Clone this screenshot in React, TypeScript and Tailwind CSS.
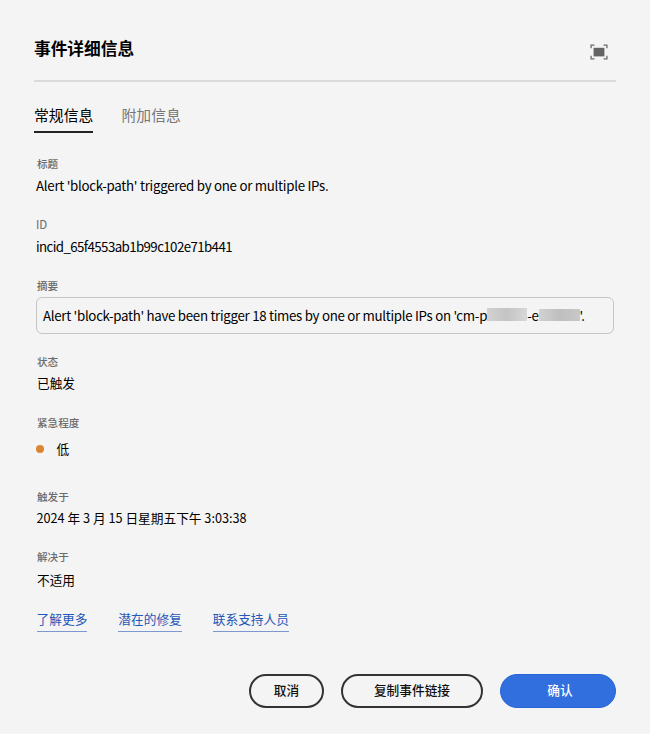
import type { ReactNode } from 'react';

function Label({ children, className = '' }: { children: ReactNode; className?: string }) {
  return <div className={`h-4 leading-4 whitespace-nowrap text-[#6b6b6b] ${className}`}>{children}</div>;
}

function Value({ children, className = '' }: { children: ReactNode; className?: string }) {
  return <div className={`h-5 leading-5 whitespace-nowrap text-black ${className}`}>{children}</div>;
}

function FullscreenIcon() {
  return (
    <svg width="18" height="16" viewBox="0 0 18 16" fill="none">
      <path d="M1.1 4.3V1.2h3.4M13.5 1.2h3.4v3.1M16.9 11.7v3.1h-3.4M4.5 14.8H1.1v-3.1" stroke="#6b6b6b" strokeWidth="1.3" />
      <rect x="3.6" y="3.8" width="10.8" height="8.6" fill="#636363" />
    </svg>
  );
}

export default function App() {
  return (
    <div className="flex h-[734px] w-[650px] flex-col bg-[#f4f4f4] pt-[36px] pr-[34px] pl-[34px] font-['Noto_Sans_CJK_SC',sans-serif] text-[12.7px] text-[#111]">
      <header className="flex h-[46px] justify-between border-b-2 border-[#dadada] pr-[8.5px]">
        <h1 className="text-[16.7px] leading-6 font-bold text-black">事件详细信息</h1>
        <button className="mt-[7.5px] h-4" aria-label="全屏"><FullscreenIcon /></button>
      </header>

      <nav className="mt-[21px] flex h-[29.5px] gap-[28.5px] text-[14.85px] leading-[23px]">
        <span className="w-[59px] border-b-2 border-[#222] whitespace-nowrap text-black">常规信息</span>
        <span className="whitespace-nowrap text-[#777]">附加信息</span>
      </nav>

      <main className="flex flex-col pl-[2px]">
        <Label className="mt-[23.5px] pl-[1px] text-[10.6px] font-medium">标题</Label>
        <Value className="mt-[4px] text-[13.3px] tracking-[-0.28px]">Alert 'block-path' triggered by one or multiple IPs.</Value>
        <Label className="mt-[20px] text-[11.5px]">ID</Label>
        <Value className="mt-[5px] text-[13.3px] tracking-[-0.6px]">incid_65f4553ab1b99c102e71b441</Value>
        <Label className="mt-[21px] pl-[1px] text-[10.6px] font-medium">摘要</Label>
        <div className="mt-[3px] flex h-[37px] w-[578px] items-center rounded-[6px] border border-[#c6c6c6] pl-[6px] text-[13.3px] tracking-[-0.3px] whitespace-nowrap text-black">
          <span className="shrink-0">Alert 'block-path' have been trigger 18 times by one or multiple IPs on 'cm-p</span>
          <span className="h-[13px] w-[40px] shrink-0 -translate-y-px bg-gradient-to-r from-[#d2d2d2] via-[#c4c4c4] to-[#d8d8d8]" />
          <span className="shrink-0">-e</span>
          <span className="h-[12px] w-[41px] shrink-0 -translate-y-px bg-gradient-to-r from-[#d2d2d2] via-[#bfbfbf] to-[#c8c8c8]" />
          <span className="shrink-0">'.</span>
        </div>
        <Label className="mt-[20px] pl-[1px] text-[10.6px] font-medium">状态</Label>
        <Value className="mt-[3px] pl-[1px]">已触发</Value>
        <Label className="mt-[22px] pl-[1px] text-[10.6px] font-medium">紧急程度</Label>
        <Value className="mt-[8px] flex items-center gap-[12.5px]">
          <span className="-ml-[0.5px] size-[8.5px] rounded-full bg-[#da8530]" />
          <span>低</span>
        </Value>
        <Label className="mt-[30px] pl-[1px] text-[10.6px] font-medium">触发于</Label>
        <Value className="mt-[3px] pl-[0.5px]">2024 年 3 月 15 日星期五下午 3:03:38</Value>
        <Label className="mt-[21px] pl-[1px] text-[10.6px] font-medium">解决于</Label>
        <Value className="mt-[5px] pl-[1px]">不适用</Value>
        <div className="mt-[18px] flex h-[24px] gap-[31px] pl-[0.6px] leading-[21px] text-[#2458b8]">
          <a className="border-b border-[#7d97d0]">了解更多</a>
          <a className="border-b border-[#7d97d0]">潜在的修复</a>
          <a className="border-b border-[#7d97d0]">联系支持人员</a>
        </div>
      </main>

      <footer className="mt-[42px] flex h-[34px] justify-end gap-[17px] font-medium">
        <button className="w-[75px] rounded-full border-2 border-[#333] pb-[2px]">取消</button>
        <button className="w-[142px] rounded-full border-2 border-[#333] pb-[2px]">复制事件链接</button>
        <button className="w-[116px] rounded-full border border-[#2866d8] bg-[#326fde] pb-[2px] pl-[4px] text-white">确认</button>
      </footer>
    </div>
  );
}
